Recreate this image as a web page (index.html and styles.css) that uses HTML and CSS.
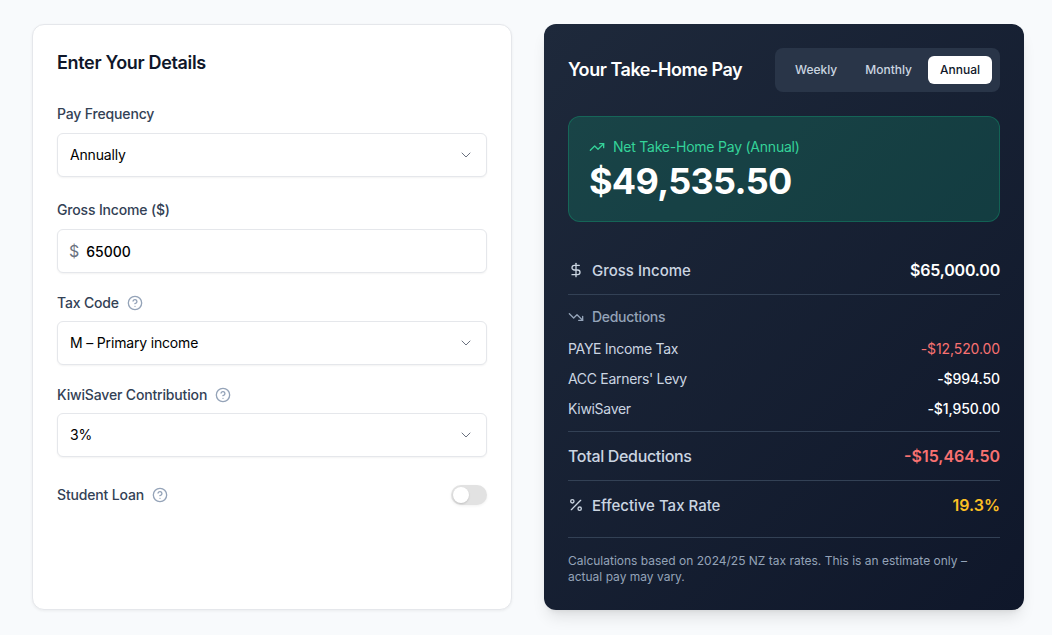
FILE: index.html
```html
<!DOCTYPE html>
<html lang="en">
<head>
    <meta charset="UTF-8">
    <meta name="viewport" content="width=device-width, initial-scale=1.0">
    <title>NZ Take-Home Pay Calculator</title>
    <link rel="stylesheet" href="styles.css">
</head>
<body>
    <main class="calculator">
        <section class="details-card">
            <h2 class="card-title">Enter Your Details</h2>

            <div class="form-fields">
                <div class="field">
                    <label class="field-label" for="frequency">Pay Frequency</label>
                    <div class="control">
                        <select id="frequency" class="select-input">
                            <option>Annually</option>
                            <option>Monthly</option>
                            <option>Weekly</option>
                        </select>
                        <svg class="chevron" viewBox="0 0 24 24"><path d="m6 9 6 6 6-6"/></svg>
                    </div>
                </div>

                <div class="field">
                    <label class="field-label" for="income">Gross Income ($)</label>
                    <div class="money-input">
                        <span class="money-sign">$</span>
                        <input id="income" class="text-input" type="text" value="65000">
                    </div>
                </div>

                <div class="field">
                    <div class="label-row">
                        <label class="row-label" for="taxCode">Tax Code</label>
                        <svg class="help-icon" viewBox="0 0 24 24"><circle cx="12" cy="12" r="10"/><path d="M9.09 9a3 3 0 0 1 5.83 1c0 2-3 3-3 3"/><path d="M12 17h.01"/></svg>
                    </div>
                    <div class="control">
                        <select id="taxCode" class="select-input">
                            <option>M – Primary income</option>
                        </select>
                        <svg class="chevron" viewBox="0 0 24 24"><path d="m6 9 6 6 6-6"/></svg>
                    </div>
                </div>

                <div class="field">
                    <div class="label-row">
                        <label class="row-label" for="kiwisaver">KiwiSaver Contribution</label>
                        <svg class="help-icon" viewBox="0 0 24 24"><circle cx="12" cy="12" r="10"/><path d="M9.09 9a3 3 0 0 1 5.83 1c0 2-3 3-3 3"/><path d="M12 17h.01"/></svg>
                    </div>
                    <div class="control">
                        <select id="kiwisaver" class="select-input">
                            <option>3%</option>
                            <option>4%</option>
                            <option>6%</option>
                        </select>
                        <svg class="chevron" viewBox="0 0 24 24"><path d="m6 9 6 6 6-6"/></svg>
                    </div>
                </div>

                <div class="toggle-row">
                    <div class="label-row label-row-flat">
                        <span class="row-label">Student Loan</span>
                        <svg class="help-icon" viewBox="0 0 24 24"><circle cx="12" cy="12" r="10"/><path d="M9.09 9a3 3 0 0 1 5.83 1c0 2-3 3-3 3"/><path d="M12 17h.01"/></svg>
                    </div>
                    <button class="toggle" type="button" aria-label="Student Loan"><span class="toggle-knob"></span></button>
                </div>
            </div>
        </section>

        <section class="results-card">
            <div class="results-header">
                <h2 class="results-title">Your Take-Home Pay</h2>
                <div class="period-tabs">
                    <button class="period-tab" type="button">Weekly</button>
                    <button class="period-tab" type="button">Monthly</button>
                    <button class="period-tab active" type="button">Annual</button>
                </div>
            </div>

            <div class="net-box">
                <div class="net-label">
                    <svg class="icon" viewBox="0 0 24 24"><path d="M22 7 13.5 15.5 8.5 10.5 2 17"/><path d="M16 7h6v6"/></svg>
                    Net Take-Home Pay (Annual)
                </div>
                <div class="net-amount">$49,535.50</div>
            </div>

            <div class="summary-row">
                <span class="summary-name">
                    <svg class="icon" viewBox="0 0 24 24"><path d="M12 2v20"/><path d="M17 5H9.5a3.5 3.5 0 0 0 0 7h5a3.5 3.5 0 0 1 0 7H6"/></svg>
                    Gross Income
                </span>
                <span class="summary-value gross-value">$65,000.00</span>
            </div>

            <div class="deductions">
                <div class="deductions-title">
                    <svg class="icon" viewBox="0 0 24 24"><path d="M22 17 13.5 8.5 8.5 13.5 2 7"/><path d="M16 17h6v-6"/></svg>
                    Deductions
                </div>
                <div class="deduction-row">
                    <span class="deduction-name">PAYE Income Tax</span>
                    <span class="deduction-red">-$12,520.00</span>
                </div>
                <div class="deduction-row">
                    <span class="deduction-name">ACC Earners' Levy</span>
                    <span class="deduction-value">-$994.50</span>
                </div>
                <div class="deduction-row">
                    <span class="deduction-name">KiwiSaver</span>
                    <span class="deduction-value">-$1,950.00</span>
                </div>
            </div>

            <div class="summary-row">
                <span class="summary-name summary-total">Total Deductions</span>
                <span class="summary-value value-red">-$15,464.50</span>
            </div>

            <div class="summary-row summary-last">
                <span class="summary-name">
                    <svg class="icon" viewBox="0 0 24 24"><path d="M19 5 5 19"/><circle cx="6.5" cy="6.5" r="2.5"/><circle cx="17.5" cy="17.5" r="2.5"/></svg>
                    Effective Tax Rate
                </span>
                <span class="summary-value value-amber">19.3%</span>
            </div>

            <p class="footnote">Calculations based on 2024/25 NZ tax rates. This is an estimate only – actual pay may vary.</p>
        </section>
    </main>
</body>
</html>
```

FILE: styles.css
```css
* {
    box-sizing: border-box;
}

body {
    margin: 0;
    background-color: #f8fafc;
    font-family: Inter, "Noto Sans", sans-serif;
    height: 100vh;
}

svg {
    fill: none;
    stroke: currentColor;
    stroke-width: 2;
    stroke-linecap: round;
    stroke-linejoin: round;
    flex-shrink: 0;
}

.calculator {
    display: grid;
    grid-template-columns: 480px 480px;
    gap: 32px;
    height: 100%;
    padding: 24px 28px 25px 32px;
}

/* left card */
.details-card {
    background-color: #ffffff;
    border: 1px solid #e5e7eb;
    border-radius: 12px;
    box-shadow: 0 1px 3px rgba(0, 0, 0, 0.06);
    padding: 24px;
}

.card-title {
    font-size: 18px;
    line-height: 28px;
    font-weight: 600;
    letter-spacing: -0.33px;
    color: #0f172a;
    margin: 0 0 24px;
}

.form-fields {
    display: flex;
    flex-direction: column;
    gap: 20px;
}

.field-label {
    display: block;
    padding-top: 3px;
    margin-bottom: 9px;
    font-size: 14px;
    line-height: 20px;
    font-weight: 500;
    letter-spacing: -0.16px;
    color: #334155;
}

.label-row {
    display: flex;
    align-items: center;
    gap: 8px;
    margin-bottom: 8px;
    height: 20px;
}

.label-row-flat {
    margin-bottom: 0;
}

.row-label {
    font-size: 14px;
    line-height: 20px;
    font-weight: 500;
    letter-spacing: -0.16px;
    color: #334155;
}

.help-icon {
    width: 16px;
    height: 16px;
    color: #94a3b8;
}

.control {
    position: relative;
}

.select-input {
    display: block;
    width: 100%;
    height: 44px;
    padding: 0 36px 2px 12px;
    appearance: none;
    background-color: #ffffff;
    border: 1px solid #e5e7eb;
    border-radius: 6px;
    box-shadow: 0 1px 2px rgba(0, 0, 0, 0.05);
    font-family: inherit;
    font-size: 14px;
    letter-spacing: -0.17px;
    color: #000000;
}

.chevron {
    position: absolute;
    top: 14px;
    right: 13px;
    width: 16px;
    height: 16px;
    color: #6b7280;
    stroke-width: 1.5;
    pointer-events: none;
}

.money-input {
    display: flex;
    align-items: center;
    gap: 7px;
    height: 44px;
    padding: 0 11px;
    background-color: #ffffff;
    border: 1px solid #e5e7eb;
    border-radius: 6px;
    box-shadow: 0 1px 2px rgba(0, 0, 0, 0.05);
}

.money-sign {
    font-size: 16px;
    color: #6b7280;
}

.text-input {
    flex: 1;
    min-width: 0;
    padding: 0;
    border: none;
    outline: none;
    background: none;
    font-family: inherit;
    font-size: 14px;
    font-weight: 500;
    color: #000000;
}

.toggle-row {
    display: flex;
    align-items: center;
    justify-content: space-between;
    margin-top: 8px;
}

.toggle {
    display: flex;
    align-items: center;
    width: 36px;
    height: 20px;
    padding: 2px;
    background-color: #e2e2e2;
    border: none;
    border-radius: 10px;
    box-shadow: 0 1px 3px rgba(0, 0, 0, 0.06);
}

.toggle-knob {
    width: 16px;
    height: 16px;
    background-color: #ffffff;
    border-radius: 50%;
    box-shadow: 0 1px 2px rgba(0, 0, 0, 0.15);
}

/* right card */
.results-card {
    background: linear-gradient(135deg, #1e293b, #0f172a);
    border-radius: 12px;
    box-shadow: 0 10px 15px -3px rgba(0, 0, 0, 0.1), 0 4px 6px -4px rgba(0, 0, 0, 0.1);
    padding: 24px;
    color: #ffffff;
}

.results-header {
    display: flex;
    align-items: center;
    justify-content: space-between;
    margin-bottom: 24px;
}

.results-title {
    font-size: 18px;
    line-height: 28px;
    font-weight: 600;
    letter-spacing: -0.45px;
    margin: 0;
}

.period-tabs {
    display: flex;
    gap: 4px;
    padding: 8px;
    background-color: #293548;
    border-radius: 8px;
}

.period-tab {
    height: 28px;
    padding: 0 12px 2px;
    background: none;
    border: none;
    border-radius: 6px;
    font-family: inherit;
    font-size: 12px;
    font-weight: 500;
    color: #cbd5e1;
}

.period-tab.active {
    background-color: #ffffff;
    color: #0f172a;
}

.net-box {
    height: 106px;
    padding: 20px;
    margin-bottom: 24px;
    background-color: rgba(16, 185, 129, 0.2);
    border: 1px solid rgba(16, 185, 129, 0.3);
    border-radius: 12px;
}

.net-label {
    display: flex;
    align-items: center;
    gap: 8px;
    font-size: 14px;
    line-height: 20px;
    letter-spacing: -0.23px;
    color: #34d399;
}

.net-amount {
    font-size: 36px;
    line-height: 40px;
    font-weight: 700;
    letter-spacing: -0.7px;
    color: #ffffff;
    margin-top: 4px;
}

.icon {
    width: 16px;
    height: 16px;
}

.summary-row {
    display: flex;
    align-items: center;
    justify-content: space-between;
    height: 49px;
    border-bottom: 1px solid #334155;
}

.summary-last {
    height: 57px;
    padding-bottom: 8px;
}

.summary-name {
    display: flex;
    align-items: center;
    gap: 8px;
    font-size: 15px;
    font-weight: 500;
    color: #cbd5e1;
}

.summary-total {
    font-size: 16px;
    letter-spacing: -0.33px;
}

.summary-value {
    font-size: 16px;
    font-weight: 600;
    color: #ffffff;
}

.gross-value {
    letter-spacing: -0.2px;
}

.value-red {
    color: #f87171;
}

.value-amber {
    color: #fbbf24;
}

.deductions {
    display: flex;
    flex-direction: column;
    gap: 10px;
    padding: 12px 0;
    border-bottom: 1px solid #334155;
}

.deductions-title {
    display: flex;
    align-items: center;
    gap: 8px;
    margin-bottom: 2px;
    font-size: 14px;
    line-height: 20px;
    font-weight: 500;
    letter-spacing: -0.3px;
    color: #94a3b8;
}

.deduction-row {
    display: flex;
    justify-content: space-between;
    font-size: 14px;
    line-height: 20px;
    letter-spacing: -0.1px;
    color: #cbd5e1;
}

.deduction-name {
    letter-spacing: -0.31px;
}

.deduction-red {
    color: #f87171;
}

.deduction-value {
    font-weight: 500;
    color: #ffffff;
}

.footnote {
    margin: 15px 0 0;
    font-size: 12px;
    line-height: 16px;
    color: #94a3b8;
}
```
